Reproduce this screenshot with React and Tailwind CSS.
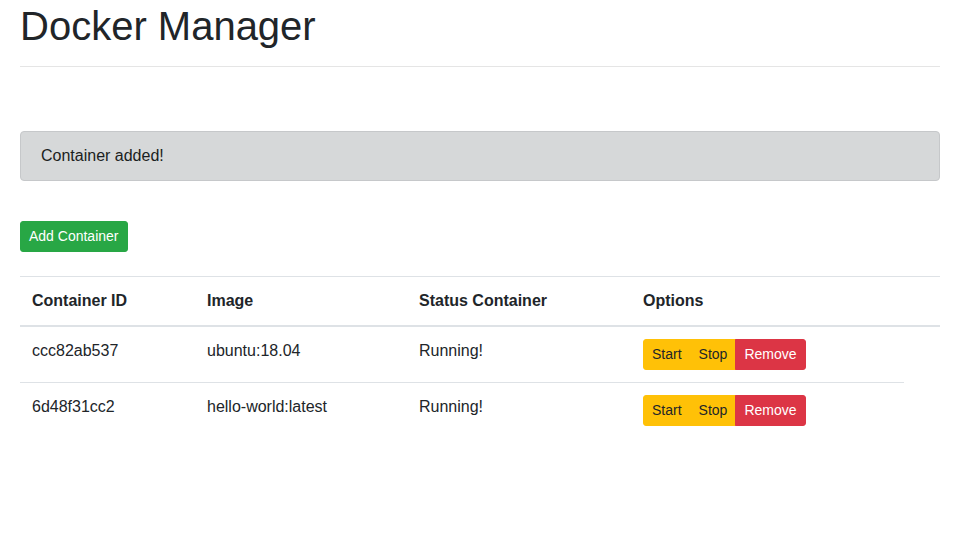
const CONTAINERS = [
  { id: "ccc82ab537", image: "ubuntu:18.04", status: "Running!" },
  { id: "6d48f31cc2", image: "hello-world:latest", status: "Running!" },
];

export default function App() {
  return (
    <div className="min-h-[540px] bg-white pl-5 pr-10 pt-[2px] font-['Liberation_Sans',Arial,sans-serif] text-base leading-6 text-[#212529]">
      {/* Header */}
      <h1 className="text-[40px] font-medium leading-[48px]">Docker Manager</h1>
      <hr className="mt-4 border-0 border-t border-[#e5e5e5]" />

      {/* Alert */}
      <div className="mt-16 rounded border border-[#c6c8ca] bg-[#d6d8d9] px-5 py-3 text-[#1b1e21]">
        Container added!
      </div>

      <button
        type="button"
        className="mt-10 block rounded-[3px] border border-[#28a745] bg-[#28a745] px-2 py-1 text-sm leading-[21px] text-white"
      >
        Add Container
      </button>

      {/* Container List */}
      <table className="mt-6 w-full table-fixed border-collapse text-left">
        <thead>
          <tr>
            <th className="w-[175px] border-t border-b-2 border-[#dee2e6] p-3 font-bold">Container ID</th>
            <th className="w-[212px] border-t border-b-2 border-[#dee2e6] p-3 font-bold">Image</th>
            <th className="w-[224px] border-t border-b-2 border-[#dee2e6] p-3 font-bold">Status Container</th>
            <th className="w-[273px] border-t border-b-2 border-[#dee2e6] p-3 font-bold">Options</th>
            <th className="border-t border-b-2 border-[#dee2e6] p-3"></th>
          </tr>
        </thead>
        <tbody>
          {CONTAINERS.map((c) => (
            <tr key={c.id}>
              <td className="border-t border-[#dee2e6] p-3 align-top">{c.id}</td>
              <td className="border-t border-[#dee2e6] p-3 align-top">{c.image}</td>
              <td className="border-t border-[#dee2e6] p-3 align-top">{c.status}</td>
              <td className="border-t border-[#dee2e6] p-3 align-top">
                <div className="inline-flex text-sm leading-[21px]">
                  <button type="button" className="rounded-l-[3px] border border-[#ffc107] bg-[#ffc107] px-2 py-1 text-[#212529]">
                    Start
                  </button>
                  <button type="button" className="-ml-px border border-[#ffc107] bg-[#ffc107] px-2 py-1 text-[#212529]">
                    Stop
                  </button>
                  <button type="button" className="-ml-px rounded-r-[3px] border border-[#dc3545] bg-[#dc3545] px-2 py-1 text-white">
                    Remove
                  </button>
                </div>
              </td>
            </tr>
          ))}
        </tbody>
      </table>
    </div>
  );
}
